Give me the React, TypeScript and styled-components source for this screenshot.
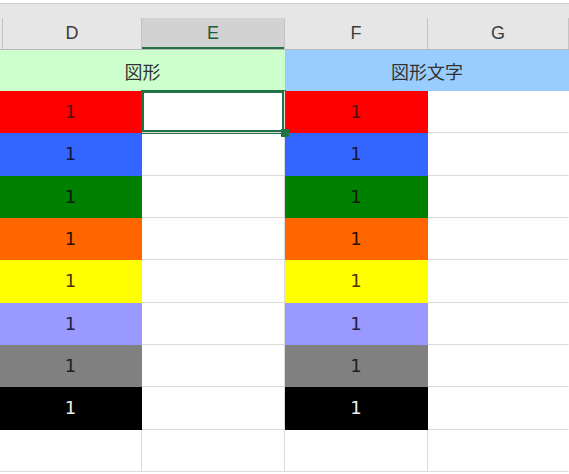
import React from 'react';
import styled, { createGlobalStyle, css } from 'styled-components';

const GlobalStyle = createGlobalStyle`
  html, body {
    margin: 0;
    padding: 0;
    background: #fff;
  }
  body {
    font-family: "Liberation Sans", Arial, sans-serif;
  }
`;

const colTemplate = '142px 143px 143px 1fr';
const gridLine = '#dadada';
const selectGreen = '#217346';

const COLUMNS = ['D', 'E', 'F', 'G'];
const SELECTED_COL = 'E';

// fill colour and font colour for each coloured row
const FILLS = [
  { bg: '#ff0000', ink: '#5a0d0d' },
  { bg: '#3366ff', ink: '#14163a' },
  { bg: '#008000', ink: '#0c1a0c' },
  { bg: '#ff6600', ink: '#2e1200' },
  { bg: '#ffff00', ink: '#4e3600' },
  { bg: '#9999ff', ink: '#202040' },
  { bg: '#808080', ink: '#1e1e1e' },
  { bg: '#000000', ink: '#eeeeee' },
];

export default function App() {
  return (
    <Sheet>
      <GlobalStyle />
      <HeaderBar>
        {COLUMNS.map((c) => (
          <ColumnHeader key={c} selected={c === SELECTED_COL}>
            {c}
          </ColumnHeader>
        ))}
      </HeaderBar>
      <BannerRow>
        <Banner bg="#ccffcc">図形</Banner>
        <Banner bg="#99ccff">図形文字</Banner>
      </BannerRow>
      <DataGrid>
        {FILLS.map((f, i) => (
          <React.Fragment key={i}>
            <Cell fill={f.bg} ink={f.ink}>1</Cell>
            <Cell selected={i === 0}>{i === 0 && <FillHandle />}</Cell>
            <Cell fill={f.bg} ink={f.ink}>1</Cell>
            <Cell last />
          </React.Fragment>
        ))}
        <Cell />
        <Cell />
        <Cell />
        <Cell last />
      </DataGrid>
    </Sheet>
  );
}

const Sheet = styled.div`
  width: 569px;
  height: 474px;
  overflow: hidden;
  padding-top: 3px;
  box-sizing: border-box;
  background: #fff;
`;

const HeaderBar = styled.div`
  display: grid;
  grid-template-columns: ${colTemplate};
  padding-top: 14px;
  background: #e6e6e6;
  border-top: 1px solid #d0d0d0;
  border-bottom: 1px solid #b8b8b8;
`;

const ColumnHeader = styled.div<{ selected?: boolean }>`
  height: 31px;
  display: flex;
  align-items: center;
  justify-content: center;
  font-size: 18px;
  color: #3c3c3c;
  border-right: 1px solid #c4c4c4;
  box-sizing: border-box;

  &:first-child {
    border-left: 1px solid #c4c4c4;
    margin-left: 2px;
  }

  ${({ selected }) =>
    selected &&
    css`
      background: #d2d2d2;
      color: #1d5c38;
      box-shadow: inset 0 -2px 0 ${selectGreen};
    `}
`;

const BannerRow = styled.div`
  display: grid;
  grid-template-columns: 285px 1fr;
  height: 41px;
`;

const Banner = styled.div<{ bg: string }>`
  display: flex;
  align-items: center;
  justify-content: center;
  background: ${({ bg }) => bg};
  font-family: "Noto Sans CJK JP", "Noto Sans", sans-serif;
  font-size: 18px;
  color: #333;
`;

const DataGrid = styled.div`
  display: grid;
  grid-template-columns: ${colTemplate};
  grid-auto-rows: 42.33px;
`;

const Cell = styled.div<{ fill?: string; ink?: string; selected?: boolean; last?: boolean }>`
  position: relative;
  display: flex;
  align-items: center;
  justify-content: center;
  box-sizing: border-box;
  font-family: "DejaVu Sans", sans-serif;
  font-size: 18px;
  color: ${({ ink }) => ink ?? '#222'};
  background: ${({ fill }) => fill ?? '#fff'};
  border-bottom: 1px solid ${({ fill }) => fill ?? gridLine};
  border-right: 1px solid ${({ fill, last }) => (last ? 'transparent' : fill ?? gridLine)};

  ${({ selected }) =>
    selected &&
    css`
      z-index: 1;
      box-shadow: 0 0 0 1px ${selectGreen}, inset 0 0 0 2px ${selectGreen};
    `}
`;

// small square at the bottom-right corner of the active cell
const FillHandle = styled.span`
  position: absolute;
  right: -5px;
  bottom: -5px;
  width: 8px;
  height: 8px;
  background: ${selectGreen};
`;
